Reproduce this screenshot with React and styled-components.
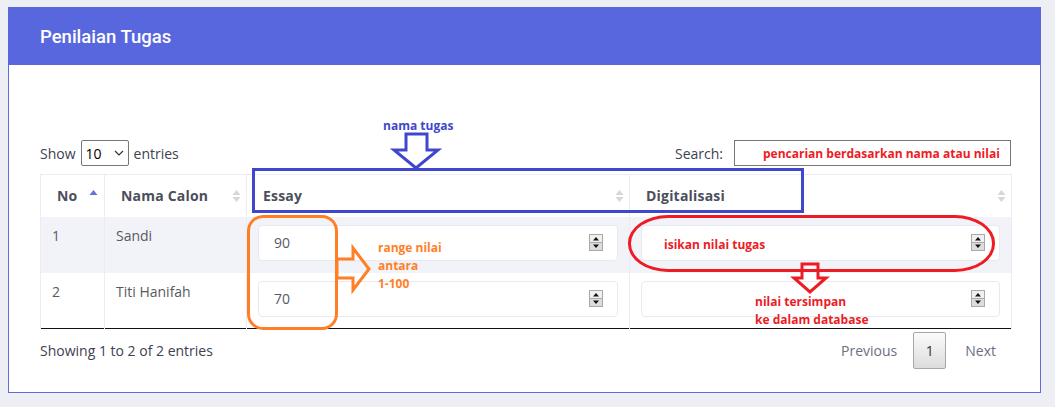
import React from "react";
import styled, { createGlobalStyle } from "styled-components";

const Global = createGlobalStyle`
  html, body { margin: 0; padding: 0; background: #eeeff5; }
  body { font-family: "Open Sans", "DejaVu Sans", sans-serif; }
  * { box-sizing: border-box; }
`;

const Page = styled.div`
  position: relative;
  width: 1055px;
  height: 407px;
  padding: 7px 14px 0 8px;
`;

const Card = styled.section`
  background: #fff;
  border: 1px solid #5f6ce0;
  border-top: none;
  height: 386px;
  display: flex;
  flex-direction: column;
`;

const CardHeader = styled.header`
  background: #5867dd;
  height: 58px;
  margin: 0 -1px;
  display: flex;
  align-items: center;
  padding: 1px 0 0 32px;
  color: #fff;
  font-family: Roboto, "Open Sans", sans-serif;
  font-weight: 500;
  font-size: 18.5px;
`;

const CardBody = styled.div`
  padding: 75px 29px 0 31px;
  font-family: "Open Sans", "DejaVu Sans", sans-serif;
  font-size: 14px;
  color: #3d4150;
`;

const Controls = styled.div`
  display: flex;
  justify-content: space-between;
  align-items: center;
  height: 26px;
`;

const Label = styled.label`
  display: flex;
  align-items: center;
  gap: 5px;
  color: #3d4150;
`;

const SelectBox = styled.div`
  width: 48px;
  height: 26px;
  border: 1px solid #767676;
  border-radius: 2px;
  display: flex;
  align-items: center;
  justify-content: space-between;
  padding: 0 4px 0 4px;
  color: #000;
  font-size: 14px;
`;

const SearchBox = styled.div`
  width: 277px;
  height: 26px;
  border: 1px solid #767676;
  display: flex;
  align-items: center;
  padding-left: 28px;
  margin-left: 6px;
`;

const Table = styled.table`
  margin-top: 8px;
  width: 971px;
  border-collapse: collapse;
  table-layout: fixed;
  border-bottom: 1px solid #111;
`;

const Th = styled.th`
  position: relative;
  height: 42px;
  text-align: left;
  padding: 0 30px 0 16px;
  font-weight: 700;
  font-size: 14px;
  letter-spacing: 0.2px;
  color: #4b4e5b;
  border: 1px solid #ebedf2;
  border-bottom: none;
`;

const SortIcon = styled.span`
  position: absolute;
  right: ${(p) => p.$right}px;
  top: 50%;
  transform: translateY(-50%);
  display: flex;
  line-height: 0;
`;

const Tr = styled.tr`
  background: ${(p) => (p.$striped ? "#f2f3f8" : "#fff")};
`;

const Td = styled.td`
  height: 56px;
  vertical-align: top;
  padding: 8px 11px 0 11px;
  border-left: 1px solid #ebedf2;
  border-right: 1px solid #ebedf2;
  color: #575962;
  font-size: 14px;
  line-height: 21px;
`;

const NumInput = styled.div`
  height: 36px;
  background: #fff;
  border: 1px solid #e8eaf1;
  border-radius: 4px;
  display: flex;
  align-items: center;
  justify-content: space-between;
  padding: 0 14px 0 15px;
  color: #575962;
  font-size: 14px;
`;

const Footer = styled.div`
  display: flex;
  justify-content: space-between;
  align-items: center;
  margin-top: 3px;
  height: 37px;
  color: #3d4150;
  font-size: 14px;
`;

const Pager = styled.div`
  display: flex;
  align-items: center;
  color: #6c6f7f;
  padding-right: 15px;
`;

const PagerLink = styled.span`
  margin: ${(p) => p.$m};
`;

const PageBtn = styled.div`
  width: 33px;
  height: 37px;
  border: 1px solid #a8a8a8;
  border-radius: 2px;
  background: linear-gradient(#fbfbfb, #dcdcdc);
  display: flex;
  align-items: center;
  justify-content: center;
  color: #333;
`;

/* annotations laid over the page */
const Note = styled.div`
  position: absolute;
  left: ${(p) => p.$x}px;
  top: ${(p) => p.$y}px;
  color: ${(p) => p.$c};
  font-family: "Open Sans", "DejaVu Sans", sans-serif;
  font-weight: 700;
  font-size: 12px;
  line-height: 18px;
  white-space: nowrap;
`;

const Frame = styled.div`
  position: absolute;
  left: ${(p) => p.$x}px;
  top: ${(p) => p.$y}px;
  width: ${(p) => p.$w}px;
  height: ${(p) => p.$h}px;
  border: 3px solid ${(p) => p.$c};
  border-radius: ${(p) => p.$r};
  pointer-events: none;
`;

const Overlay = styled.svg`
  position: absolute;
  left: 0;
  top: 0;
  pointer-events: none;
`;

const SearchNote = styled.span`
  color: #ed1c24;
  font-weight: 700;
  font-size: 12px;
`;

const Sort = ({ asc, right }) => (
  <SortIcon $right={right}>
    <svg width="9" height="14" viewBox="0 0 9 14">
      {asc ? (
        <polygon points="4.5,1 8.5,6 0.5,6" fill="#6a71d6" />
      ) : (
        <>
          <polygon points="4.5,1 8.5,6 0.5,6" fill="#d6d7dd" />
          <polygon points="4.5,13 8.5,8 0.5,8" fill="#d6d7dd" />
        </>
      )}
    </svg>
  </SortIcon>
);

const Spinner = () => (
  <svg width="14" height="17" viewBox="0 0 14 17">
    <rect x="0.5" y="0.5" width="13" height="16" fill="#e6e6e6" stroke="#a9a9a9" />
    <line x1="1" y1="8.5" x2="13" y2="8.5" stroke="#a9a9a9" />
    <rect x="1" y="1" width="12" height="7" fill="#f0f0f0" />
    <rect x="1" y="9" width="12" height="7" fill="#dcdcdc" />
    <polygon points="7,3 10,6.5 4,6.5" fill="#111" />
    <polygon points="7,14 10,10.5 4,10.5" fill="#111" />
  </svg>
);

const Chevron = () => (
  <svg width="10" height="6" viewBox="0 0 10 6">
    <polyline points="1,1 5,5 9,1" fill="none" stroke="#333" strokeWidth="1.2" />
  </svg>
);

const rows = [
  { no: 1, name: "Sandi", essay: "90" },
  { no: 2, name: "Titi Hanifah", essay: "70" },
];

export default function App() {
  return (
    <>
      <Global />
      <Page>
        <Card>
          <CardHeader>Penilaian Tugas</CardHeader>
          <CardBody>
            <Controls>
              <Label>
                Show
                <SelectBox>
                  10 <Chevron />
                </SelectBox>
                entries
              </Label>
              <Label>
                Search:
                <SearchBox>
                  <SearchNote>pencarian berdasarkan nama atau nilai</SearchNote>
                </SearchBox>
              </Label>
            </Controls>
            <Table>
              <colgroup>
                <col style={{ width: 64 }} />
                <col style={{ width: 142 }} />
                <col style={{ width: 383 }} />
                <col style={{ width: 382 }} />
              </colgroup>
              <thead>
                <tr>
                  <Th>
                    No
                    <Sort asc right={6} />
                  </Th>
                  <Th>
                    Nama Calon
                    <Sort right={5} />
                  </Th>
                  <Th>
                    Essay
                    <Sort right={5} />
                  </Th>
                  <Th>
                    Digitalisasi
                    <Sort right={5} />
                  </Th>
                </tr>
              </thead>
              <tbody>
                {rows.map((r, i) => (
                  <Tr key={r.no} $striped={i % 2 === 0}>
                    <Td>{r.no}</Td>
                    <Td>{r.name}</Td>
                    <Td>
                      <NumInput>
                        {r.essay}
                        <Spinner />
                      </NumInput>
                    </Td>
                    <Td>
                      <NumInput>
                        <span />
                        <Spinner />
                      </NumInput>
                    </Td>
                  </Tr>
                ))}
              </tbody>
            </Table>
            <Footer>
              <span>Showing 1 to 2 of 2 entries</span>
              <Pager>
                <PagerLink $m="0 16px 0 0">Previous</PagerLink>
                <PageBtn>1</PageBtn>
                <PagerLink $m="0 0 0 19px">Next</PagerLink>
              </Pager>
            </Footer>
          </CardBody>
        </Card>

        <Note $x={383} $y={117} $c="#3f48cc">nama tugas</Note>
        <Frame $x={252} $y={168} $w={552} $h={45} $c="#3f48cc" $r="0" />
        <Frame $x={247} $y={215} $w={91} $h={115} $c="#ff7f27" $r="16px" />
        <Frame $x={628} $y={215} $w={367} $h={57} $c="#ed1c24" $r="40px / 28px" />
        <Note $x={378} $y={239} $c="#ff7f27">
          range nilai
          <br />
          antara
          <br />
          1-100
        </Note>
        <Note $x={664} $y={236} $c="#ed1c24">isikan nilai tugas</Note>
        <Note $x={755} $y={293} $c="#ed1c24">
          nilai tersimpan
          <br />
          ke dalam database
        </Note>
        <Overlay width="1055" height="407" viewBox="0 0 1055 407">
          <polygon
            points="406,134 427,134 427,150 438,150 416,168 394,150 406,150"
            fill="none"
            stroke="#3f48cc"
            strokeWidth="3"
          />
          <polygon
            points="337,259 353,259 353,248 369,269 353,290 353,278 337,278"
            fill="none"
            stroke="#ff7f27"
            strokeWidth="3"
          />
          <polygon
            points="802,264 818,264 818,278 826,278 810,292 794,278 802,278"
            fill="none"
            stroke="#ed1c24"
            strokeWidth="3"
          />
        </Overlay>
      </Page>
    </>
  );
}
